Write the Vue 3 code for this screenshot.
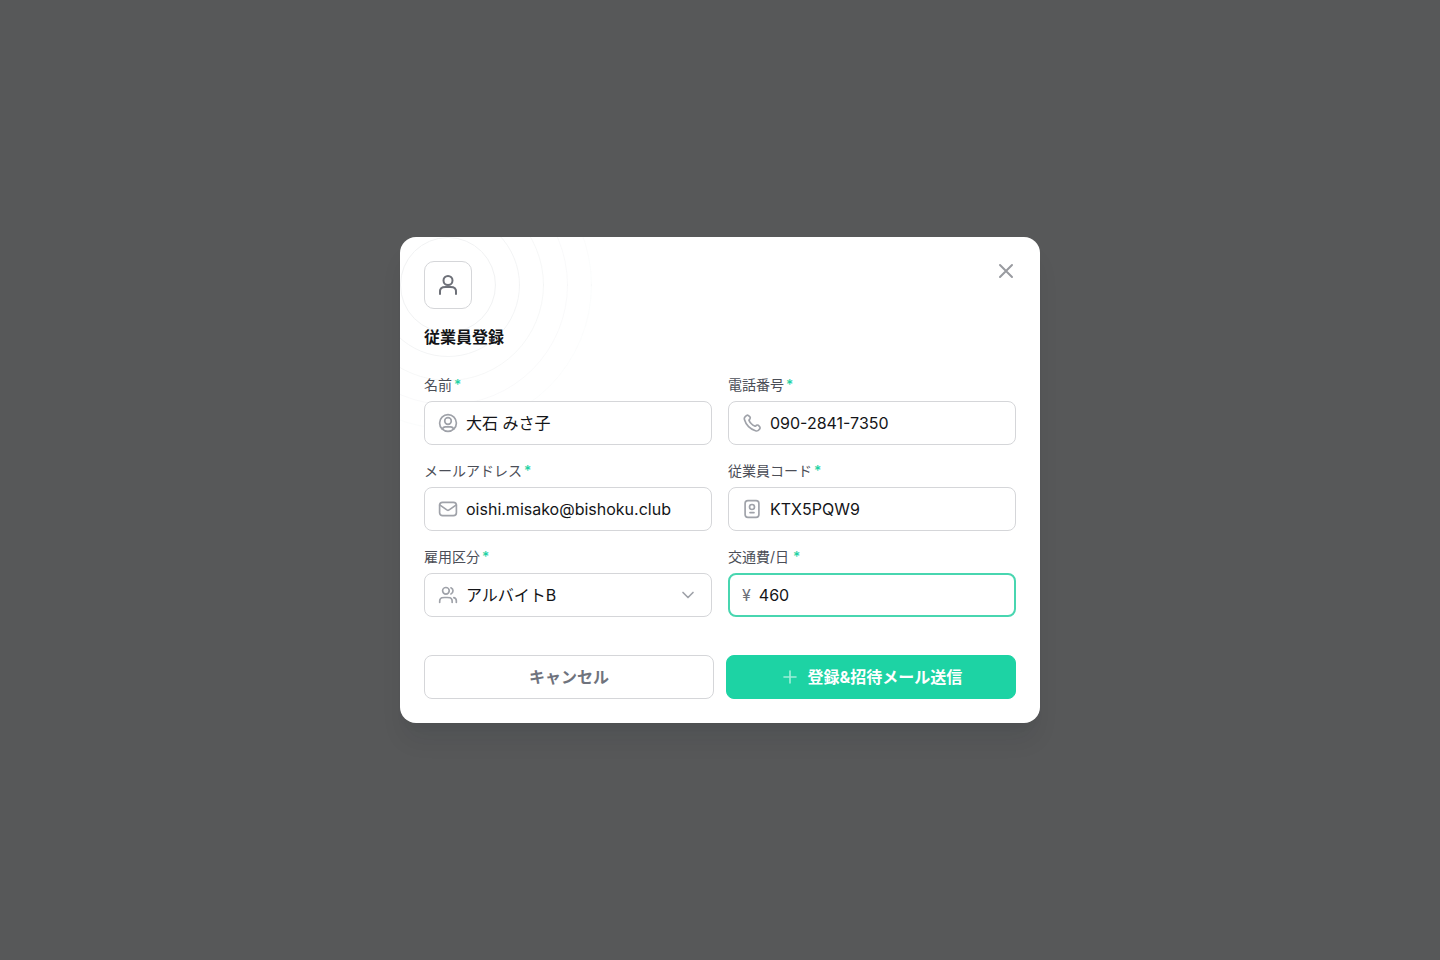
<script setup>
import { ref } from 'vue'

const name = ref('大石 みさ子')
const phone = ref('090-2841-7350')
const email = ref('oishi.misako@bishoku.club')
const code = ref('KTX5PQW9')
const type = ref('アルバイトB')
const fare = ref('460')
const types = ['アルバイトA', 'アルバイトB', '正社員']
</script>

<template>
  <div class="overlay">
    <form class="modal" role="dialog" aria-modal="true" aria-labelledby="title" @submit.prevent>
      <svg class="rings" viewBox="0 0 336 336" aria-hidden="true">
        <circle cx="168" cy="168" r="47.5" stroke-opacity="1" />
        <circle cx="168" cy="168" r="71.5" stroke-opacity=".85" />
        <circle cx="168" cy="168" r="95.5" stroke-opacity=".65" />
        <circle cx="168" cy="168" r="119.5" stroke-opacity=".45" />
        <circle cx="168" cy="168" r="143.5" stroke-opacity=".25" />
      </svg>

      <header class="header">
        <div class="badge">
          <svg class="icon-lg" viewBox="0 0 24 24" aria-hidden="true">
            <path d="M20 21v-1.500c0-1.400 0-2.090-.17-2.660a4 4 0 0 0-2.670-2.670C16.590 14 15.900 14 14.500 14h-5c-1.400 0-2.090 0-2.660.17a4 4 0 0 0-2.670 2.670C4 17.410 4 18.100 4 19.500V21" />
            <circle cx="12" cy="7.500" r="4.500" />
          </svg>
        </div>
        <h2 id="title" class="title">従業員登録</h2>
        <button type="button" class="close" aria-label="閉じる">
          <svg class="icon-lg" viewBox="0 0 24 24" aria-hidden="true"><path d="M18 6 6 18M6 6l12 12" /></svg>
        </button>
      </header>

      <div class="fields">
        <div class="field">
          <label for="name">名前<span class="req">*</span></label>
          <div class="control">
            <svg class="icon" viewBox="0 0 20 20" aria-hidden="true">
              <circle cx="10" cy="10" r="8.400" />
              <circle cx="10" cy="8" r="3.300" />
              <path d="M4.400 16.200c.4-1.700 1.400-2.400 3-2.400h5.200c1.600 0 2.600.7 3 2.400" />
            </svg>
            <input id="name" v-model="name" type="text" />
          </div>
        </div>

        <div class="field">
          <label for="phone">電話番号<span class="req">*</span></label>
          <div class="control">
            <svg class="icon" viewBox="0 0 20 20" aria-hidden="true">
              <path d="M6.980 7.380a12.200 12.200 0 0 0 2.370 3.340 12.200 12.200 0 0 0 3.340 2.370c.1.050.16.080.22.100.23.070.52.020.71-.12.060-.04.110-.09.210-.19.310-.31.470-.47.620-.57a1.670 1.670 0 0 1 1.820 0c.16.100.31.260.62.570l.17.170c.48.480.71.710.84.970.26.510.26 1.120 0 1.630-.13.260-.36.490-.84.970l-.14.140c-.47.470-.7.700-1.020.880-.35.200-.9.340-1.300.340-.37 0-.62-.07-1.120-.21a15.900 15.900 0 0 1-6.900-4.060 15.900 15.900 0 0 1-4.060-6.900c-.14-.5-.21-.75-.21-1.120 0-.41.140-.95.340-1.300.18-.32.410-.55.880-1.020l.14-.14c.48-.48.710-.71.970-.84a1.810 1.810 0 0 1 1.630 0c.26.130.49.360.97.840l.17.170c.31.310.47.470.57.620.36.550.36 1.270 0 1.820-.1.160-.26.310-.57.620-.1.100-.15.150-.19.210a.87.870 0 0 0-.12.710c.2.060.5.120.1.220Z" />
            </svg>
            <input id="phone" v-model="phone" type="tel" />
          </div>
        </div>

        <div class="field">
          <label for="email">メールアドレス<span class="req">*</span></label>
          <div class="control">
            <svg class="icon" viewBox="0 0 20 20" aria-hidden="true">
              <rect x="1.600" y="3.300" width="16.800" height="13.400" rx="3" />
              <path d="m1.700 5.900 6.800 4.700c.55.390.83.580 1.130.65.240.06.500.06.740 0 .3-.07.580-.26 1.130-.65l6.800-4.700" />
            </svg>
            <input id="email" v-model="email" type="email" />
          </div>
        </div>

        <div class="field">
          <label for="code">従業員コード<span class="req">*</span></label>
          <div class="control">
            <svg class="icon" viewBox="0 0 20 20" aria-hidden="true">
              <rect x="3.100" y="1.600" width="13.800" height="16.800" rx="2.800" />
              <circle cx="10" cy="8" r="2.500" />
              <path d="M8 13.700h4" />
            </svg>
            <input id="code" v-model="code" type="text" />
          </div>
        </div>

        <div class="field">
          <label for="type">雇用区分<span class="req">*</span></label>
          <div class="control">
            <svg class="icon" viewBox="0 0 20 20" aria-hidden="true">
              <path d="M18.330 17.500v-1.670a3.330 3.330 0 0 0-2.500-3.230M12.920 2.740a3.330 3.330 0 0 1 0 6.180M14.170 17.500c0-1.550 0-2.330-.25-2.940a3.330 3.330 0 0 0-1.810-1.810c-.61-.25-1.390-.25-2.940-.25h-2.500c-1.550 0-2.330 0-2.940.25a3.330 3.330 0 0 0-1.810 1.810c-.25.610-.25 1.390-.25 2.940" />
              <circle cx="7.920" cy="5.830" r="3.330" />
            </svg>
            <select id="type" v-model="type">
              <option v-for="t in types" :key="t">{{ t }}</option>
            </select>
            <svg class="icon" viewBox="0 0 20 20" aria-hidden="true"><path d="m5 7.500 5 5 5-5" /></svg>
          </div>
        </div>

        <div class="field">
          <label for="fare">交通費/日<span class="req wide">*</span></label>
          <div class="control active">
            <span class="yen">¥</span>
            <input id="fare" v-model="fare" type="text" inputmode="numeric" />
          </div>
        </div>
      </div>

      <footer class="actions">
        <button type="button" class="btn">キャンセル</button>
        <button type="submit" class="btn primary">
          <svg class="icon" viewBox="0 0 20 20" aria-hidden="true"><path d="M10 4v12M4 10h12" /></svg>
          登録&amp;招待メール送信
        </button>
      </footer>
    </form>
  </div>
</template>

<style>
body {
  background: #575859;
}
</style>

<style scoped>
.overlay {
  display: grid;
  place-items: center;
  min-height: 100vh;
  box-sizing: border-box;
  padding: 24px;
  font-family: Inter, "Noto Sans CJK JP", sans-serif;
  font-size: 16px;
  line-height: 24px;
  color: #141518;
}
.modal {
  position: relative;
  overflow: hidden;
  box-sizing: border-box;
  width: 100%;
  max-width: 640px;
  padding: 24px;
  border-radius: 16px;
  background: #fff;
  box-shadow: 0 20px 24px -4px rgba(16, 24, 40, 0.08), 0 8px 8px -4px rgba(16, 24, 40, 0.03);
}
svg {
  display: block;
  flex: none;
  fill: none;
  stroke: currentColor;
  stroke-width: 1.67;
  stroke-linecap: round;
  stroke-linejoin: round;
}
.rings {
  position: absolute;
  top: -120px;
  left: -120px;
  width: 336px;
  height: 336px;
  stroke: #f1f2f3;
  stroke-width: 1;
}
.icon {
  width: 20px;
  height: 20px;
  color: #9fa2a9;
}
.icon-lg {
  width: 24px;
  height: 24px;
  stroke-width: 2;
}
.header {
  position: relative;
  margin-bottom: 26px;
}
.badge {
  display: grid;
  place-items: center;
  box-sizing: border-box;
  width: 48px;
  height: 48px;
  border: 1px solid #d5d6d9;
  border-radius: 10px;
  background: #fff;
  color: #6d7078;
}
.title {
  margin: 16px 0 0;
  font-size: 16px;
  font-weight: 700;
  line-height: 24px;
}
.close {
  position: absolute;
  top: -12px;
  right: -12px;
  padding: 10px;
  border: 0;
  background: none;
  color: #999ba0;
  cursor: pointer;
}
.fields {
  position: relative;
  display: grid;
  grid-template-columns: repeat(2, minmax(0, 1fr));
  gap: 16px;
}
.field {
  display: flex;
  flex-direction: column;
  gap: 6px;
}
label {
  font-size: 14px;
  line-height: 20px;
  color: #4b4e57;
}
.req {
  margin-left: 2px;
  color: #1ed2a4;
  font-weight: 500;
}
.req.wide {
  margin-left: 4px;
}
.control {
  display: flex;
  align-items: center;
  gap: 8px;
  box-sizing: border-box;
  height: 44px;
  padding: 0 13px;
  border: 1px solid #d5d6d9;
  border-radius: 8px;
  background: #fff;
}
.control.active {
  padding: 0 12px;
  border: 2px solid #48d6b0;
}
.yen {
  color: #6d7078;
}
input,
select {
  flex: 1;
  min-width: 0;
  height: 24px;
  padding: 0;
  border: 0;
  outline: 0;
  background: none;
  color: inherit;
  font: inherit;
  appearance: none;
}
.actions {
  display: flex;
  gap: 12px;
  margin-top: 38px;
}
.btn {
  display: flex;
  flex: 1 1 0;
  align-items: center;
  justify-content: center;
  gap: 8px;
  box-sizing: border-box;
  height: 44px;
  padding: 0 16px;
  border: 1px solid #d5d6d9;
  border-radius: 8px;
  background: #fff;
  color: #6f737d;
  font: inherit;
  font-weight: 700;
  cursor: pointer;
}
.btn.primary {
  border-color: #1dd3a4;
  background: #1dd3a4;
  color: #fff;
}
.primary .icon {
  color: #9deed8;
}
</style>
